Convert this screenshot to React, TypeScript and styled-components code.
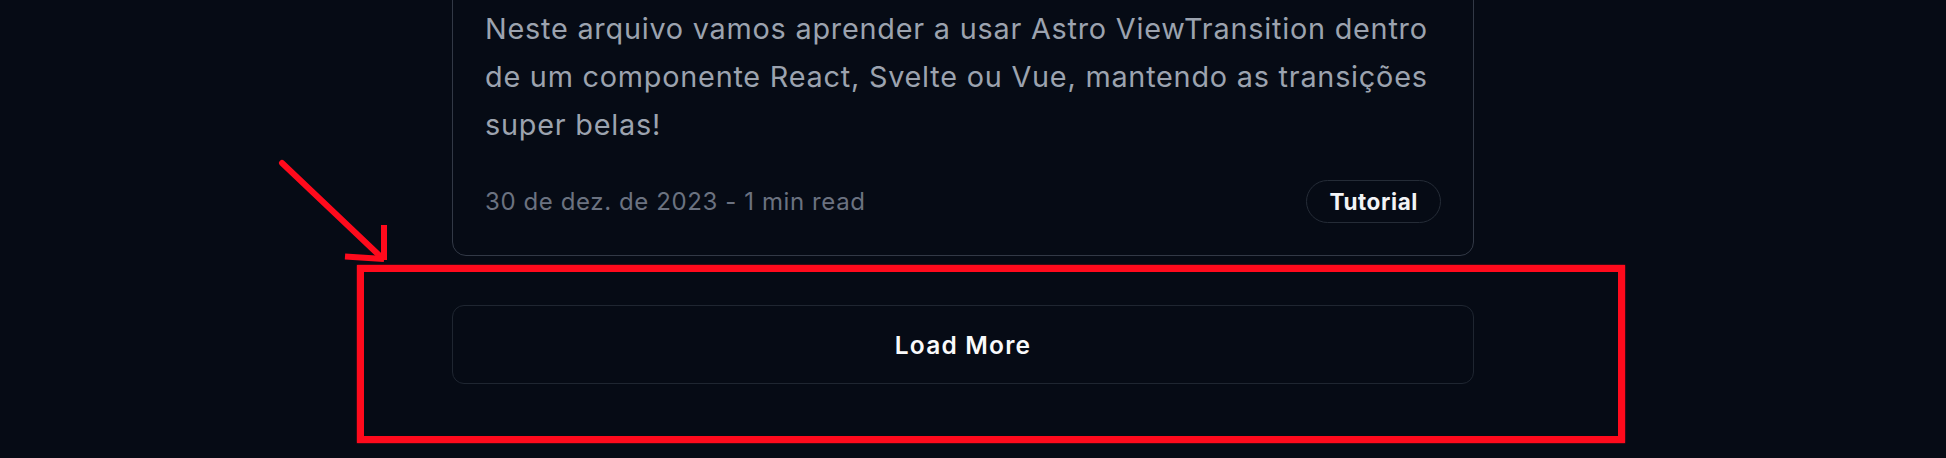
import React from "react";
import styled, { createGlobalStyle } from "styled-components";

const GlobalStyle = createGlobalStyle`
  html, body {
    margin: 0;
    padding: 0;
    background: #060b15;
    overflow: hidden;
  }
  body {
    font-family: Inter, "Noto Sans", sans-serif;
    -webkit-font-smoothing: antialiased;
  }
`;

const Page = styled.div`
  position: relative;
  width: 1946px;
  height: 458px;
  background: #060b15;
  padding-left: 452px;
  box-sizing: border-box;
`;

const Column = styled.div`
  width: 1022px;
  display: flex;
  flex-direction: column;
  gap: 49px;
`;

const Card = styled.article`
  margin-top: -29px;
  border: 1px solid #323946;
  border-radius: 14px;
  padding: 33px 32px 32px 32px;
  display: flex;
  flex-direction: column;
  gap: 31px;
`;

const Excerpt = styled.p`
  margin: 0;
  font-size: 28.8px;
  line-height: 48px;
  color: #9ca3af;
  letter-spacing: 0.78px;
`;

const MetaRow = styled.div`
  display: flex;
  align-items: center;
  justify-content: space-between;
`;

const MetaText = styled.span`
  font-size: 24px;
  color: #6b7280;
  letter-spacing: 0.6px;
`;

const Tag = styled.span`
  display: inline-flex;
  align-items: center;
  justify-content: center;
  height: 43px;
  box-sizing: border-box;
  padding: 0 22px;
  border: 1px solid #252c37;
  border-radius: 999px;
  font-size: 22.5px;
  font-weight: 700;
  color: #f3f4f6;
  letter-spacing: 0.6px;
`;

const LoadMore = styled.button`
  height: 79px;
  width: 100%;
  background: transparent;
  border: 1px solid #1f2631;
  border-radius: 12px;
  font-family: Inter, "Noto Sans", sans-serif;
  font-size: 24.5px;
  font-weight: 600;
  color: #f9fafb;
  letter-spacing: 1.2px;
  cursor: pointer;
`;

const Highlight = styled.div`
  position: absolute;
  left: 357px;
  top: 265px;
  width: 1268px;
  height: 178px;
  box-sizing: border-box;
  border: 7px solid #ff0a1c;
  box-shadow: 0 0 1.5px rgba(255, 10, 28, 0.8);
  pointer-events: none;
`;

const ArrowSvg = styled.svg`
  position: absolute;
  left: 270px;
  top: 150px;
  width: 130px;
  height: 130px;
  pointer-events: none;
`;

export default function App() {
  return (
    <>
      <GlobalStyle />
      <Page>
        <Column>
          <Card>
            <Excerpt>
              Neste arquivo vamos aprender a usar Astro ViewTransition dentro
              de um componente React, Svelte ou Vue, mantendo as transições
              super belas!
            </Excerpt>
            <MetaRow>
              <MetaText>30 de dez. de 2023 - 1 min read</MetaText>
              <Tag>Tutorial</Tag>
            </MetaRow>
          </Card>
          <LoadMore>Load More</LoadMore>
        </Column>
        <Highlight />
        <ArrowSvg viewBox="0 0 130 130">
          <g stroke="#ff0a1c" strokeWidth="6" fill="none">
            <line x1="12" y1="13" x2="112" y2="108" strokeLinecap="round" />
            <line x1="114" y1="75" x2="114" y2="110" strokeLinecap="butt" />
            <line x1="75" y1="106.5" x2="114" y2="109" strokeLinecap="butt" />
          </g>
        </ArrowSvg>
      </Page>
    </>
  );
}
